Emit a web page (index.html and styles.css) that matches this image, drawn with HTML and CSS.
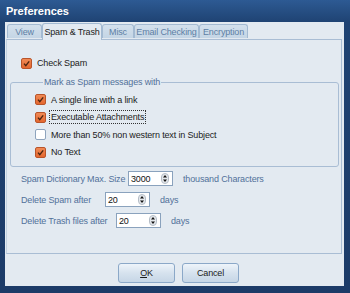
FILE: index.html
```html
<!DOCTYPE html>
<html lang="en">
<head>
    <meta charset="UTF-8">
    <meta name="viewport" content="width=device-width, initial-scale=1.0">
    <title>Preferences</title>
    <link rel="stylesheet" href="styles.css">
</head>
<body>
    <div class="window">
        <div class="title-bar">Preferences</div>
        <div class="client">
            <div class="tabs">
                <div class="tab tab-view">View</div>
                <div class="tab tab-active">Spam &amp; Trash</div>
                <div class="tab tab-misc">Misc</div>
                <div class="tab tab-email">Email Checking</div>
                <div class="tab tab-enc">Encryption</div>
            </div>
            <div class="tab-panel">
                <div class="check-row check-main">
                    <span class="box checked"><svg viewBox="0 0 11 11" width="11" height="11"><path d="M3 5.6 L4.8 7.6 L8.2 3.4" fill="none" stroke="#4a2410" stroke-width="1.4"/></svg></span>
                    <span class="label">Check Spam</span>
                </div>

                <fieldset class="group">
                    <legend>Mark as Spam messages with</legend>
                    <div class="check-row">
                        <span class="box checked"><svg viewBox="0 0 11 11" width="11" height="11"><path d="M3 5.6 L4.8 7.6 L8.2 3.4" fill="none" stroke="#4a2410" stroke-width="1.4"/></svg></span>
                        <span class="label">A single line with a link</span>
                    </div>
                    <div class="check-row">
                        <span class="box checked"><svg viewBox="0 0 11 11" width="11" height="11"><path d="M3 5.6 L4.8 7.6 L8.2 3.4" fill="none" stroke="#4a2410" stroke-width="1.4"/></svg></span>
                        <span class="label focused">Executable Attachments</span>
                    </div>
                    <div class="check-row">
                        <span class="box"></span>
                        <span class="label">More than 50% non western text in Subject</span>
                    </div>
                    <div class="check-row">
                        <span class="box checked"><svg viewBox="0 0 11 11" width="11" height="11"><path d="M3 5.6 L4.8 7.6 L8.2 3.4" fill="none" stroke="#4a2410" stroke-width="1.4"/></svg></span>
                        <span class="label">No Text</span>
                    </div>
                </fieldset>

                <div class="spin-rows">
                    <div class="spin-row">
                        <span class="spin-label w-dict">Spam Dictionary Max. Size</span>
                        <div class="spin"><span class="spin-value">3000</span><span class="spin-btn"><svg viewBox="0 0 8 11" width="8" height="11"><rect x="0.5" y="0.5" width="7" height="10" rx="3.5" fill="#e4e8ec" stroke="#b4bcc6"/><path d="M4 2 L6 4.4 L2 4.4 Z M4 9 L6 6.6 L2 6.6 Z" fill="#111"/></svg></span></div>
                        <span class="unit">thousand Characters</span>
                    </div>
                    <div class="spin-row">
                        <span class="spin-label w-spam">Delete Spam after</span>
                        <div class="spin"><span class="spin-value">20</span><span class="spin-btn"><svg viewBox="0 0 8 11" width="8" height="11"><rect x="0.5" y="0.5" width="7" height="10" rx="3.5" fill="#e4e8ec" stroke="#b4bcc6"/><path d="M4 2 L6 4.4 L2 4.4 Z M4 9 L6 6.6 L2 6.6 Z" fill="#111"/></svg></span></div>
                        <span class="unit">days</span>
                    </div>
                    <div class="spin-row">
                        <span class="spin-label w-trash">Delete Trash files after</span>
                        <div class="spin"><span class="spin-value">20</span><span class="spin-btn"><svg viewBox="0 0 8 11" width="8" height="11"><rect x="0.5" y="0.5" width="7" height="10" rx="3.5" fill="#e4e8ec" stroke="#b4bcc6"/><path d="M4 2 L6 4.4 L2 4.4 Z M4 9 L6 6.6 L2 6.6 Z" fill="#111"/></svg></span></div>
                        <span class="unit">days</span>
                    </div>
                </div>
            </div>
            <div class="buttons">
                <button class="btn"><u>O</u>K</button>
                <button class="btn">Cancel</button>
            </div>
        </div>
    </div>
</body>
</html>
```

FILE: styles.css
```css
body {
    margin: 0;
    font-family: "Liberation Sans", Arial, sans-serif;
    font-size: 9px;
    letter-spacing: -0.15px;
    background-color: #1c3b68;
}

.window {
    width: 350px;
    height: 293px;
    box-sizing: border-box;
    padding: 0 6px 7px 5px;
    background: linear-gradient(to bottom, #2d5a93 0px, #1f4373 22px, #1c3b68 100%);
    display: flex;
    flex-direction: column;
}

.title-bar {
    height: 22px;
    line-height: 22px;
    padding-left: 1px;
    color: #fff;
    font-weight: bold;
    font-size: 11px;
    letter-spacing: 0;
}

.client {
    flex: 1;
    background-color: #e3eaf1;
    display: flex;
    flex-direction: column;
}

/* tabs */
.tabs {
    display: flex;
    align-items: flex-end;
    height: 17px;
    padding-left: 2px;
    position: relative;
    z-index: 1;
}

.tab {
    height: 14px;
    line-height: 14px;
    box-sizing: border-box;
    border: 1px solid #a3bad2;
    border-bottom: none;
    border-radius: 3px 3px 0 0;
    background: linear-gradient(to bottom, #d3e0ec, #c4d5e5);
    color: #5d7fa5;
    text-align: center;
    margin-bottom: 1px;
}

.tab-view { width: 35px; }
.tab-misc { width: 32px; }
.tab-email { width: 65px; }
.tab-enc { width: 49px; }

.tab-active {
    width: 60px;
    height: 17px;
    line-height: 16px;
    margin-bottom: -1px;
    background: #e3eaf1;
    color: #1b1b1b;
    border-color: #a3bad2;
}

.tab-panel {
    margin-left: 1px;
    width: 336px;
    height: 215px;
    box-sizing: border-box;
    border: 1px solid #a9bdd4;
    border-left-color: #c3d2e1;
    padding: 17px 2px 0 3px;
}

/* checkboxes */
.check-row {
    display: flex;
    align-items: center;
    height: 17px;
    color: #1b1b1b;
}

.check-main {
    padding-left: 11px;
    height: 12px;
    margin-bottom: 8px;
}

.box {
    width: 11px;
    height: 11px;
    box-sizing: border-box;
    border: 1px solid #8ea4bd;
    border-radius: 2px;
    background: #fff;
    margin-right: 3px;
    flex: none;
    position: relative;
}

.box.checked {
    border-color: #b9542a;
    background: linear-gradient(to bottom, #f08a55, #e4672f);
}

.box svg {
    position: absolute;
    left: -1px;
    top: -1px;
}

.label {
    padding: 1px 1px;
    border: 1px solid transparent;
    white-space: nowrap;
}

.label.focused {
    border: 1px dotted #333;
}

.group {
    margin: 0;
    padding: 4px 0 2px 24px;
    border: 1px solid #a9bdd4;
    border-radius: 3px;
    height: 90px;
    box-sizing: border-box;
}

.group legend {
    color: #52719a;
    padding: 0 1px;
    margin-left: 8px;
}

.group .check-row {
    height: 17.5px;
}

/* spin boxes */
.spin-rows {
    display: flex;
    flex-direction: column;
    padding: 4px 0 0 11px;
    gap: 6px;
}

.spin-row {
    display: flex;
    align-items: center;
    height: 15px;
    color: #52719a;
    white-space: nowrap;
}

.spin-label { flex: none; }
.w-dict { width: 107px; }
.w-spam { width: 84px; }
.w-trash { width: 95px; }

.spin {
    width: 45px;
    height: 15px;
    box-sizing: border-box;
    border: 1px solid #8aa2bd;
    background: #fff;
    display: flex;
    align-items: center;
    justify-content: space-between;
    padding: 0 3px 0 2px;
    color: #111;
}

.spin-btn {
    display: flex;
}

.unit {
    margin-left: 10px;
}

/* dialog buttons */
.buttons {
    flex: 1;
    display: flex;
    justify-content: center;
    gap: 7px;
    padding: 9px 0 0 8px;
    box-sizing: border-box;
}

.btn {
    width: 57px;
    height: 20px;
    font-family: inherit;
    font-size: 9px;
    letter-spacing: inherit;
    color: #1b1b1b;
    border: 1px solid #8ba8c8;
    border-radius: 3px;
    background: linear-gradient(to bottom, #eef4fa, #d6e2ee 50%, #c6d6e6);
    padding: 0;
}
```
